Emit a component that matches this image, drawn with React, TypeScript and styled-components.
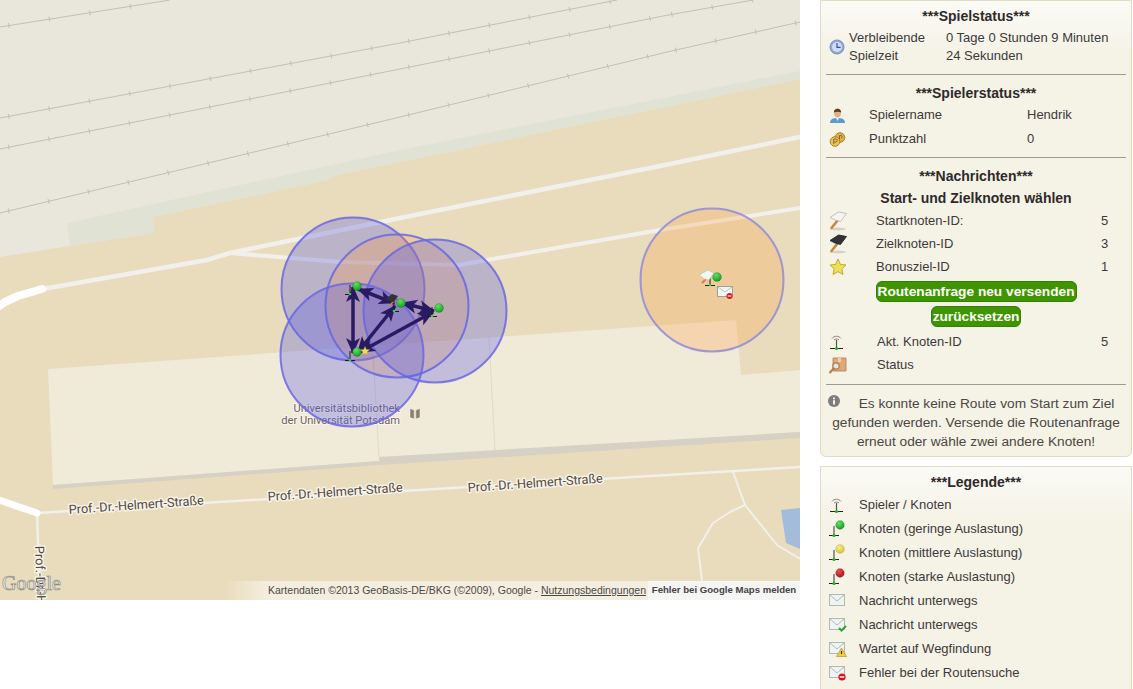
import styled, { createGlobalStyle } from "styled-components";

const GlobalStyle = createGlobalStyle`
  html, body {
    margin: 0;
    height: 689px;
    overflow: hidden;
    background: #ffffff;
  }
`;

const Page = styled.div`
  display: flex;
  align-items: flex-start;
  gap: 20px;
  width: 1133px;
  height: 689px;
  overflow: hidden;
  font-family: "Liberation Sans", Arial, sans-serif;
  font-size: 13px;
  color: #3d3a3a;
`;

const MapFrame = styled.div`
  position: relative;
  flex: none;
  width: 800px;
  height: 600px;
  overflow: hidden;
`;

const MapSvg = styled.svg`
  display: block;
`;

const RoadLabel = styled.text`
  font-family: Roboto, sans-serif;
  font-size: 12.7px;
  fill: #55493d;
  stroke: #f6f3ea;
  stroke-width: 3px;
  stroke-linejoin: round;
  paint-order: stroke;
`;

const PlaceLabel = styled.text`
  font-family: Roboto, sans-serif;
  font-size: 11.1px;
  fill: #6d6260;
  stroke: #f8f5ec;
  stroke-width: 2px;
  stroke-linejoin: round;
  paint-order: stroke;
  text-anchor: end;
`;

const LogoText = styled.text`
  font-family: "Liberation Serif", serif;
  font-size: 20px;
  fill: #f4f4f0;
  stroke: #8a8a84;
  stroke-width: 0.7px;
`;

const Attribution = styled.div`
  position: absolute;
  right: 0;
  bottom: 0;
  display: flex;
  align-items: stretch;
  height: 19px;
`;

const Copyright = styled.div`
  padding: 3px 2px 0 44px;
  font-size: 10.5px;
  color: #4a4a48;
  white-space: nowrap;
  background: linear-gradient(90deg, rgba(245, 240, 226, 0), #f3eedf 44px);
`;

const TermsLink = styled.span`
  text-decoration: underline;
`;

const ReportLink = styled.div`
  width: 152px;
  box-sizing: border-box;
  padding-top: 3px;
  text-align: center;
  font-size: 9.6px;
  font-weight: 700;
  color: #444444;
  white-space: nowrap;
  background: #f5f5f3;
`;

const Sidebar = styled.div`
  flex: none;
  display: flex;
  flex-direction: column;
  gap: 9px;
  width: 312px;
`;

const Panel = styled.section`
  box-sizing: border-box;
  padding: 3px 5px 5px;
  border: 1px solid #e2dcc4;
  border-radius: 0 0 6px 6px;
  background: linear-gradient(180deg, #fbfbf6 0, #f5f2e6 52px);
`;

const Heading = styled.h3<{ $top?: number }>`
  margin: ${(p) => p.$top ?? 0}px 0 0;
  height: 22px;
  line-height: 24px;
  text-align: center;
  font-size: 14px;
  font-weight: 700;
  color: #2e2a2a;
`;

const Divider = styled.hr<{ $top: number }>`
  margin: ${(p) => p.$top}px 0 0;
  height: 1px;
  border: 0;
  background: #9c9b97;
`;

const TimeRow = styled.div`
  display: grid;
  grid-template-columns: 20px 97px 1fr;
  align-items: center;
  margin-top: 3px;
  padding-left: 3px;
  line-height: 18px;
`;

const Row = styled.div<{ $icon: number; $label: number; $height: number; $top?: number }>`
  display: grid;
  grid-template-columns: ${(p) => p.$icon}px ${(p) => p.$label}px 1fr;
  align-items: center;
  height: ${(p) => p.$height}px;
  margin-top: ${(p) => p.$top ?? 0}px;
  padding-left: 3px;
  line-height: 18px;
`;

const ButtonRow = styled.div<{ $top: number }>`
  display: flex;
  justify-content: center;
  margin-top: ${(p) => p.$top}px;
`;

const GreenButton = styled.button`
  box-sizing: border-box;
  height: 21px;
  padding: 0 1px;
  border: 1px solid #32800a;
  border-radius: 6px;
  background: #3f9500;
  color: #ffffff;
  font-family: inherit;
  font-size: 13.7px;
  font-weight: 700;
  line-height: 18px;
  white-space: nowrap;
`;

const Message = styled.p`
  margin: 9px 0 0;
  text-align: center;
  font-size: 13.7px;
  line-height: 19px;
  color: #4b4745;
`;

const InfoIcon = styled.svg`
  margin: 0 19px 0 -10px;
  vertical-align: 1px;
`;

const LegendRows = styled.div`
  margin-top: 1px;
`;

const LegendRow = styled.div`
  display: grid;
  grid-template-columns: 30px 1fr;
  align-items: center;
  height: 24px;
  padding-left: 3px;
  line-height: 18px;
`;

const Icon = styled.svg`
  display: block;
`;

const rails = [
  [[0, 27], [170, 0]],
  [[0, 118], [400, 43], [617, 0]],
  [[0, 149], [400, 69], [663, 16], [753, 0]],
  [[0, 213], [400, 117], [667, 52], [800, 22]],
];

// little cross ticks along the railway lines
const railTicks = (pts: number[][]) => {
  const out: string[] = [];
  for (let i = 0; i < pts.length - 1; i++) {
    const [x1, y1] = pts[i];
    const [x2, y2] = pts[i + 1];
    const len = Math.hypot(x2 - x1, y2 - y1);
    for (let d = 9; d < len; d += 41) {
      const x = x1 + ((x2 - x1) * d) / len;
      const y = y1 + ((y2 - y1) * d) / len;
      const nx = ((y2 - y1) / len) * 2.5;
      const ny = ((x1 - x2) / len) * 2.5;
      out.push(`M${x - nx} ${y - ny}L${x + nx} ${y + ny}`);
    }
  }
  return out.join("");
};

const toPoints = (pts: number[][]) => pts.map((p) => p.join(",")).join(" ");

const ranges = [
  { x: 353, y: 289, orange: false },
  { x: 397, y: 306, orange: true },
  { x: 435, y: 311, orange: false },
  { x: 352, y: 355, orange: false },
  { x: 712, y: 280, orange: true },
];

const edges = [
  [353, 287, 353, 353],
  [358, 289, 394, 303],
  [395, 306, 358, 352],
  [433, 312, 360, 352],
  [402, 303, 434, 311],
];

const nodes = [
  [350, 294],
  [394, 311],
  [432, 316],
  [350, 360],
  [710, 285],
];

const Ball = ({ x, y, r, id }: { x: number; y: number; r: number; id: string }) => (
  <circle cx={x} cy={y} r={r} fill={`url(#${id})`} stroke="#00000030" strokeWidth={0.5} />
);

const BallDefs = () => (
  <defs>
    <radialGradient id="ballGreen" cx="40%" cy="30%" r="75%">
      <stop offset="0" stopColor="#5fe05f" />
      <stop offset="1" stopColor="#0e9a1e" />
    </radialGradient>
    <radialGradient id="ballYellow" cx="40%" cy="30%" r="75%">
      <stop offset="0" stopColor="#f6ee8a" />
      <stop offset="1" stopColor="#d9be22" />
    </radialGradient>
    <radialGradient id="ballRed" cx="40%" cy="30%" r="75%">
      <stop offset="0" stopColor="#e8504f" />
      <stop offset="1" stopColor="#b00c14" />
    </radialGradient>
  </defs>
);

const Star = ({ size = 18 }: { size?: number }) => (
  <Icon width={size} height={size} viewBox="0 0 18 18">
    <path d="M9 1l2.400 5.400 5.600.6-4.200 3.800 1.200 5.700L9 13.600l-5 2.900 1.200-5.700L1 7l5.600-.6z" fill="#ece05a" stroke="#c4ab2c" strokeWidth={1} />
  </Icon>
);

const Hatchet = ({ dark }: { dark?: boolean }) => (
  <Icon width={18} height={20} viewBox="0 0 18 20">
    <ellipse cx={9} cy={18} rx={8} ry={1.5} fill="#00000022" />
    <path d="M8.500 9.500L2.500 17" stroke="#c98546" strokeWidth={2.6} strokeLinecap="round" />
    <path d="M1 6.500L9.500 1 17.500 2.500 11.500 10.500 6 9z" fill={dark ? "#333333" : "#f4f4f0"} stroke={dark ? "#1c1c1c" : "#b9b5a8"} strokeWidth={0.8} />
  </Icon>
);

const Antenna = ({ ball }: { ball?: string }) => (
  <Icon width={18} height={18} viewBox="0 0 18 18">
    {!ball && (
      <path d="M3 5.500C5 2.500 10 2.500 12 5.500M5 7C6 5.700 9 5.700 10 7" fill="none" stroke="#8a8a80" strokeWidth={1} />
    )}
    <path d={ball ? "M5 6v9" : "M7.500 7v8"} stroke="#55554e" strokeWidth={1.2} />
    <path d={ball ? "M0 15.500h10" : "M1 15.500h13"} stroke="#23231f" strokeWidth={1} />
    <circle cx={ball ? 5 : 7.500} cy={15.500} r={1.6} fill="#1fae2a" />
    {ball && <Ball x={11} y={5} r={4.4} id={ball} />}
  </Icon>
);

const Envelope = ({ badge }: { badge?: "ok" | "wait" | "stop" }) => (
  <Icon width={18} height={16} viewBox="0 0 18 16">
    <rect x={0.5} y={1.5} width={15} height={11} fill="#eef4f4" stroke="#b4b9b0" />
    <path d="M1 2l7 6 7-6" fill="none" stroke="#b4b9b0" />
    {badge === "ok" && <path d="M10 11l2.500 2.500L17 9" fill="none" stroke="#2ea52e" strokeWidth={2} />}
    {badge === "wait" && (
      <>
        <path d="M12.500 7l5 8.500h-10z" fill="#f0cf3a" stroke="#a78a1a" strokeWidth={0.6} />
        <path d="M12.500 10v3" stroke="#333333" strokeWidth={1.2} />
      </>
    )}
    {badge === "stop" && (
      <>
        <circle cx={13} cy={12} r={3.6} fill="#d9141e" />
        <path d="M10.800 12h4.400" stroke="#ffffff" strokeWidth={1.4} />
      </>
    )}
  </Icon>
);

const ClockIcon = () => (
  <Icon width={17} height={18} viewBox="0 0 17 18">
    <circle cx={8} cy={9} r={7} fill="#8fa9dc" stroke="#7f8fa8" />
    <circle cx={8} cy={9} r={5} fill="#cfdcf5" />
    <path d="M8 5v4.300h3.600" fill="none" stroke="#34509a" strokeWidth={1.2} />
  </Icon>
);

const UserIcon = () => (
  <Icon width={17} height={17} viewBox="0 0 17 17">
    <path d="M1 16c0-4 3-5 7.500-5s7.500 1 7.500 5z" fill="#5c9bd0" />
    <path d="M7 11l1.500 3 1.500-3z" fill="#f2f2f2" />
    <ellipse cx={8.5} cy={6} rx={3.4} ry={4.4} fill="#e0b088" />
    <path d="M4.800 5.500c0-5 7.400-5 7.400 0-2-1-5.400-1-7.400 0z" fill="#5a3a22" />
  </Icon>
);

const CoinsIcon = () => (
  <Icon width={17} height={17} viewBox="0 0 17 17">
    <circle cx={11} cy={6.500} r={4.800} fill="#e0b14a" stroke="#a8802a" />
    <circle cx={6} cy={10.500} r={4.800} fill="#ecc25c" stroke="#a8802a" />
    <path d="M4.800 13V8h2a1.400 1.400 0 010 3h-2M10.500 8.500V4.500h1.500a1.200 1.200 0 010 2.500" fill="none" stroke="#8c6a1e" strokeWidth={1} />
  </Icon>
);

const BoxSearchIcon = () => (
  <Icon width={18} height={18} viewBox="0 0 18 18">
    <path d="M4 2h13v13H4z" fill="#e0a878" stroke="#b87a48" strokeWidth={0.8} />
    <path d="M9 2h3v4H9z" fill="#f0d0a8" />
    <circle cx={7} cy={10} r={3.200} fill="#dce8f0" stroke="#a87a50" strokeWidth={1.200} />
    <path d="M4.500 12.500L1 16.500" stroke="#c07c48" strokeWidth={2} strokeLinecap="round" />
  </Icon>
);

const legend = [
  { icon: <Antenna />, text: "Spieler / Knoten" },
  { icon: <Antenna ball="ballGreen" />, text: "Knoten (geringe Auslastung)" },
  { icon: <Antenna ball="ballYellow" />, text: "Knoten (mittlere Auslastung)" },
  { icon: <Antenna ball="ballRed" />, text: "Knoten (starke Auslastung)" },
  { icon: <Envelope />, text: "Nachricht unterwegs" },
  { icon: <Envelope badge="ok" />, text: "Nachricht unterwegs" },
  { icon: <Envelope badge="wait" />, text: "Wartet auf Wegfindung" },
  { icon: <Envelope badge="stop" />, text: "Fehler bei der Routensuche" },
  { icon: <Envelope />, text: "" },
];

const GameMap = () => (
  <MapFrame>
    <MapSvg width={800} height={600} viewBox="0 0 800 600">
      <BallDefs />
      <defs>
        <marker id="head" markerUnits="userSpaceOnUse" markerWidth={18} markerHeight={18} refX={15} refY={9} orient="auto-start-reverse">
          <path d="M0 2L16 9 0 16 4 9z" fill="#2a1a63" />
        </marker>
      </defs>

      <rect width={800} height={600} fill="#e8dcbc" />
      <path d="M0 0H800V79L400 162 337 175 328 180 153 217 154 233 70 246 0 257Z" fill="#e9e6db" />
      <path d="M67 223L400 150 800 71V79L400 162 337 175 328 180 153 217 154 233 70 246Z" fill="#e0e3d4" />
      {rails.map((line, i) => (
        <g key={i} fill="none" stroke="#c2bfb8">
          <polyline points={toPoints(line)} strokeWidth={1} />
          <path d={railTicks(line)} strokeWidth={1} />
        </g>
      ))}

      <path d="M781 510L800 508V549L786 543Z" fill="#a3bcdb" />
      <path d="M48 369L736 320 741 375 800 370V432L495 451 379 457V461L53 485Z" fill="#f0ead8" />
      <path d="M53 485L379 461V457L800 432V438L379 465 53 489Z" fill="#d6d1c5" />
      <path d="M373 353L379 457M489 337L495 451" fill="none" stroke="#e0dac8" />

      <g fill="none" stroke="#f1f0ec" strokeLinejoin="round">
        <polyline points="43,289 207,260 230,253 400,218 660,166 800,137" strokeWidth={4.500} />
        <polyline points="230,253 340,262 460,265 487,260 660,230 800,208" strokeWidth={4} />
        <polyline points="37,513 800,467" strokeWidth={2.500} />
        <polyline points="37,513 40,600" strokeWidth={2.500} />
        <polyline points="733,472 745,505 777,545 800,559" strokeWidth={2} />
        <polyline points="745,505 730,512 713,523 698,548 702,581" strokeWidth={2} />
      </g>
      <g fill="none" stroke="#ffffff" strokeLinejoin="round" strokeLinecap="round">
        <polyline points="-6,310 5,302 18,296 42,289" strokeWidth={8} />
        <polyline points="-4,499 37,513" strokeWidth={7} />
      </g>

      <RoadLabel x={69} y={514} transform="rotate(-4 69 514)">Prof.-Dr.-Helmert-Straße</RoadLabel>
      <RoadLabel x={268} y={501} transform="rotate(-4 268 501)">Prof.-Dr.-Helmert-Straße</RoadLabel>
      <RoadLabel x={468} y={492} transform="rotate(-4 468 492)">Prof.-Dr.-Helmert-Straße</RoadLabel>
      <RoadLabel x={35} y={546} transform="rotate(88 35 546)">Prof.-Dr.-Helmert-Straße</RoadLabel>

      <PlaceLabel x={400} y={412}>Universitätsbibliothek</PlaceLabel>
      <PlaceLabel x={400} y={424}>der Universität Potsdam</PlaceLabel>
      <path d="M410 408.500l4.200 1.500v9l-4.200-1.500zM415.800 410l4.200-1.500v9l-4.200 1.500z" fill="#8c7f6c" stroke="#f8f5ec" strokeWidth={0.5} />

      {ranges.map((c, i) => (
        <circle
          key={i}
          cx={c.x}
          cy={c.y}
          r={71.500}
          fill={c.orange ? "#ff9632" : "#6060e0"}
          fillOpacity={c.orange ? 0.25 : 0.33}
          stroke={i === 4 ? "#8f8ada" : "#6a66e4"}
          strokeOpacity={0.85}
          strokeWidth={2}
        />
      ))}

      {edges.map(([x1, y1, x2, y2], i) => (
        <line key={i} x1={x1} y1={y1} x2={x2} y2={y2} stroke="#2a1a63" strokeWidth={3.500} markerStart="url(#head)" markerEnd="url(#head)" />
      ))}

      {nodes.map(([x, y], i) => (
        <g key={i}>
          <path d={`M${x} ${y - 9}V${y}M${x - 5} ${y + 0.5}H${x + 5}`} stroke="#1c1c18" strokeWidth={1} />
          <circle cx={x} cy={y} r={1.300} fill="#2cdc3a" />
          <Ball x={x + 7} y={y - 8} r={4.500} id="ballGreen" />
        </g>
      ))}

      <path d="M389 306l7-7" stroke="#c98546" strokeWidth={1.500} />
      <path d="M385 299l7-5 6 2-4 6-5-1z" fill="#333333" />
      <path d="M365 346.500l1.300 3 3.200.3-2.400 2.100.7 3.100-2.800-1.600-2.800 1.600.7-3.100-2.400-2.100 3.200-.3z" fill="#ece05a" stroke="#b89a2c" strokeWidth={0.5} />

      <path d="M702 283l8-8" stroke="#c98546" strokeWidth={2} />
      <path d="M699 275l9-5 6 3-5 7-5-1z" fill="#f6f6f2" stroke="#b9b5a8" strokeWidth={0.6} />
      <rect x={717.500} y={286.500} width={15} height={10} fill="#eef5f4" stroke="#9da394" />
      <path d="M718 287l7 5 7-5" fill="none" stroke="#b0b5a8" strokeWidth={0.8} />
      <circle cx={729.500} cy={296} r={3} fill="#d9141e" />
      <path d="M727.700 296h3.600" stroke="#ffffff" strokeWidth={1.200} />

      <LogoText x={2} y={590}>Google</LogoText>
    </MapSvg>
    <Attribution>
      <Copyright>
        Kartendaten ©2013 GeoBasis-DE/BKG (©2009), Google - <TermsLink>Nutzungsbedingungen</TermsLink>
      </Copyright>
      <ReportLink>Fehler bei Google Maps melden</ReportLink>
    </Attribution>
  </MapFrame>
);

const App = () => (
  <Page>
    <GlobalStyle />
    <GameMap />
    <Sidebar>
      <Panel>
        <Heading>***Spielstatus***</Heading>
        <TimeRow>
          <ClockIcon />
          <span>
            Verbleibende
            <br />
            Spielzeit
          </span>
          <span>
            0 Tage 0 Stunden 9 Minuten
            <br />
            24 Sekunden
          </span>
        </TimeRow>
        <Divider $top={9} />

        <Heading $top={6}>***Spielerstatus***</Heading>
        <Row $icon={40} $label={158} $height={24}>
          <UserIcon />
          <span>Spielername</span>
          <span>Hendrik</span>
        </Row>
        <Row $icon={40} $label={158} $height={24}>
          <CoinsIcon />
          <span>Punktzahl</span>
          <span>0</span>
        </Row>
        <Divider $top={6} />

        <Heading $top={6}>***Nachrichten***</Heading>
        <Heading>Start- und Zielknoten wählen</Heading>
        <Row $icon={47} $label={225} $height={23} $top={1}>
          <Hatchet />
          <span>Startknoten-ID:</span>
          <span>5</span>
        </Row>
        <Row $icon={47} $label={225} $height={23}>
          <Hatchet dark />
          <span>Zielknoten-ID</span>
          <span>3</span>
        </Row>
        <Row $icon={47} $label={225} $height={23}>
          <Star />
          <span>Bonusziel-ID</span>
          <span>1</span>
        </Row>
        <ButtonRow $top={3}>
          <GreenButton>Routenanfrage neu versenden</GreenButton>
        </ButtonRow>
        <ButtonRow $top={4}>
          <GreenButton>zurücksetzen</GreenButton>
        </ButtonRow>
        <Row $icon={48} $label={224} $height={23} $top={3}>
          <Antenna />
          <span>Akt. Knoten-ID</span>
          <span>5</span>
        </Row>
        <Row $icon={48} $label={224} $height={23}>
          <BoxSearchIcon />
          <span>Status</span>
        </Row>
        <Divider $top={8} />
        <Message>
          <InfoIcon width={12} height={12} viewBox="0 0 12 12">
            <circle cx={6} cy={6} r={6} fill="#7c7c7c" />
            <path d="M5 2.500h2v1.800H5zM5 5.200h2v4.300H5z" fill="#f5f2e6" />
          </InfoIcon>
          Es konnte keine Route vom Start zum Ziel gefunden werden. Versende die Routenanfrage erneut oder wähle zwei andere Knoten!
        </Message>
      </Panel>

      <Panel>
        <Heading>***Legende***</Heading>
        <LegendRows>
          {legend.map((item, i) => (
            <LegendRow key={i}>
              {item.icon}
              <span>{item.text}</span>
            </LegendRow>
          ))}
        </LegendRows>
      </Panel>
    </Sidebar>
  </Page>
);

export default App;
